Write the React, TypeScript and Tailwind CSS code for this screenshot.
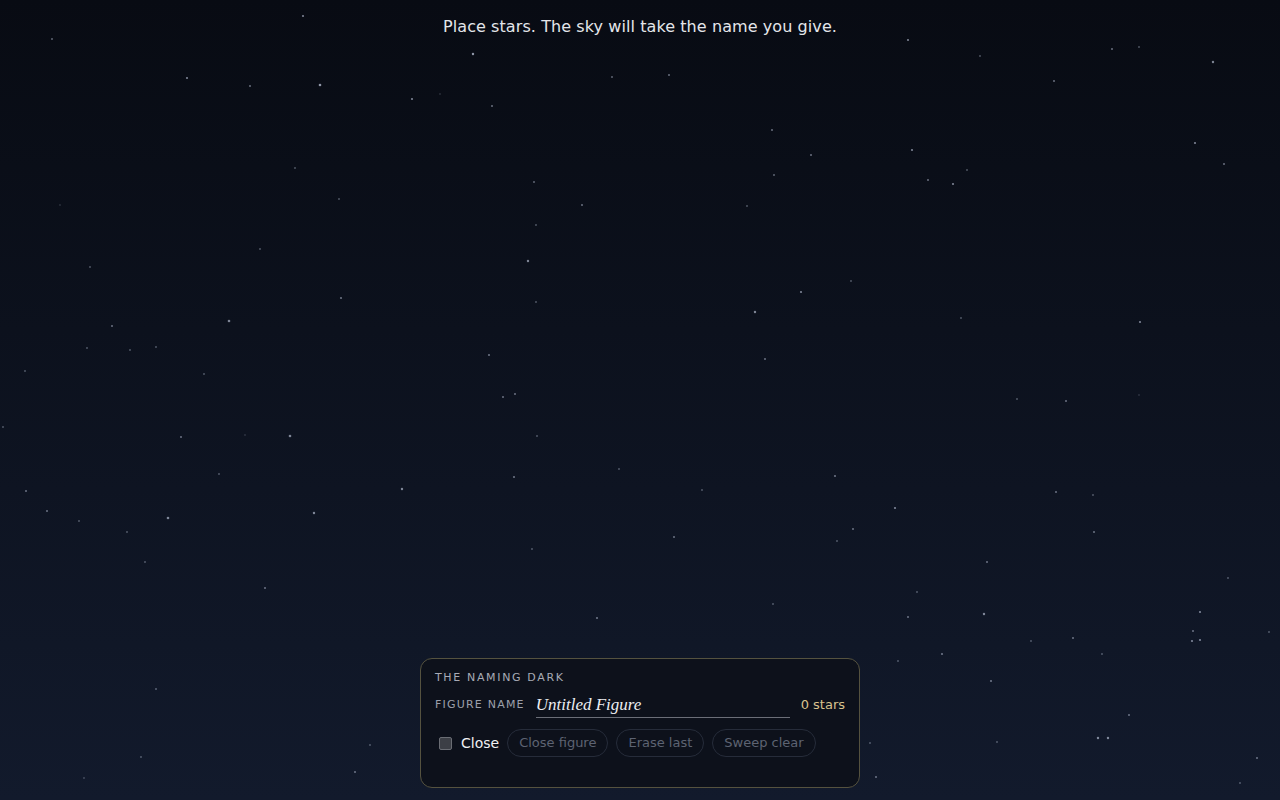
import { type JSX } from 'react';

// [x, y, radius, opacity]
const STARS: [number, number, number, number][] = [
  [303, 16, 1, 0.6], [52, 39, 0.8, 0.5], [473, 54, 1.1, 0.7], [908, 40, 1, 0.6], [1112, 49, 0.9, 0.5],
  [1139, 47, 0.8, 0.4], [1213, 62, 1.1, 0.6], [187, 78, 1, 0.6], [250, 86, 0.9, 0.5], [320, 85, 1.2, 0.7],
  [412, 99, 1, 0.6], [492, 106, 0.9, 0.5], [612, 77, 0.8, 0.5], [669, 75, 0.9, 0.5], [980, 56, 0.8, 0.4],
  [1054, 81, 0.9, 0.5], [1195, 143, 1, 0.6], [1224, 164, 0.9, 0.5], [772, 130, 0.9, 0.5], [811, 155, 0.9, 0.5],
  [912, 150, 1, 0.6], [928, 180, 0.9, 0.5], [953, 184, 1, 0.6], [967, 170, 0.8, 0.4], [774, 175, 0.8, 0.5],
  [295, 168, 0.8, 0.4], [534, 182, 0.8, 0.5], [339, 199, 0.8, 0.4], [582, 205, 0.9, 0.5], [747, 206, 0.8, 0.4],
  [536, 225, 0.8, 0.4], [260, 249, 0.8, 0.4], [528, 261, 1.1, 0.6], [90, 267, 0.8, 0.4], [851, 281, 0.8, 0.4],
  [801, 292, 1, 0.6], [341, 298, 1, 0.5], [536, 302, 0.8, 0.4], [755, 312, 1.1, 0.6], [229, 321, 1.2, 0.6],
  [112, 326, 0.9, 0.5], [961, 318, 0.8, 0.4], [1140, 322, 1, 0.6], [87, 348, 0.8, 0.4], [130, 350, 0.8, 0.4],
  [156, 347, 0.8, 0.4], [489, 355, 1, 0.5], [765, 359, 0.9, 0.5], [25, 371, 0.8, 0.4], [204, 374, 0.8, 0.4],
  [503, 397, 0.9, 0.5], [515, 394, 0.9, 0.5], [1066, 401, 0.9, 0.5], [1017, 399, 0.8, 0.4], [3, 427, 0.8, 0.4],
  [181, 437, 0.9, 0.5], [290, 436, 1.2, 0.6], [537, 436, 0.8, 0.4], [619, 469, 0.8, 0.4], [514, 477, 1, 0.5],
  [835, 476, 1, 0.5], [219, 474, 0.8, 0.4], [26, 491, 0.9, 0.5], [402, 489, 1.1, 0.6], [702, 490, 0.8, 0.4],
  [1056, 492, 0.9, 0.5], [1093, 495, 0.8, 0.4], [895, 508, 1, 0.6], [47, 511, 0.9, 0.5], [168, 518, 1.2, 0.6],
  [314, 513, 1.1, 0.6], [79, 521, 0.8, 0.4], [853, 529, 0.9, 0.5], [1094, 532, 0.9, 0.5], [127, 532, 0.8, 0.4],
  [674, 537, 0.9, 0.5], [532, 549, 0.8, 0.4], [837, 541, 0.8, 0.4], [145, 562, 0.8, 0.4], [987, 562, 0.9, 0.5],
  [265, 588, 0.9, 0.5], [917, 592, 0.8, 0.4], [1228, 578, 0.8, 0.4], [984, 614, 1.1, 0.6], [1200, 612, 1, 0.6],
  [597, 618, 1, 0.5], [773, 604, 0.8, 0.4], [908, 617, 0.9, 0.5], [1193, 631, 0.9, 0.5], [1192, 641, 1, 0.6],
  [1200, 640, 1, 0.6], [1269, 632, 0.8, 0.4], [1073, 638, 0.9, 0.5], [1031, 641, 0.8, 0.4], [942, 654, 1, 0.5],
  [898, 661, 0.8, 0.4], [1102, 654, 0.8, 0.4], [991, 681, 1, 0.5], [156, 689, 0.9, 0.4], [1129, 715, 0.9, 0.5],
  [1098, 738, 1.1, 0.6], [1108, 738, 1.1, 0.6], [997, 742, 0.8, 0.4], [370, 745, 0.8, 0.4], [870, 743, 0.8, 0.4],
  [1257, 758, 0.9, 0.5], [141, 757, 0.8, 0.4], [355, 772, 0.9, 0.5], [84, 778, 0.8, 0.3], [1240, 783, 0.8, 0.4],
  [876, 777, 0.9, 0.5], [245, 435, 0.7, 0.3], [1139, 395, 0.7, 0.3], [440, 94, 0.7, 0.3], [60, 205, 0.7, 0.3],
];

/**
 * Background layer: the scattered star field drawn as one svg.
 */
function StarField(): JSX.Element {
  return (
    <svg className="absolute inset-0 h-full w-full" viewBox="0 0 1280 800" aria-hidden="true">
      {STARS.map(([x, y, r, o], i) => (
        <circle key={i} cx={x} cy={y} r={r * 1.1} fill="#c9d2e6" opacity={o} />
      ))}
    </svg>
  );
}

function PillButton({ label }: { label: string }): JSX.Element {
  return (
    <button
      type="button"
      disabled
      className="flex h-[28px] items-center rounded-full border border-[#262c3a] px-[11px] text-[13px] text-[#5d6372]"
    >
      {label}
    </button>
  );
}

export default function App(): JSX.Element {
  return (
    <div
      className="relative flex h-screen w-full flex-col items-center overflow-hidden bg-gradient-to-b from-[#080b13] to-[#121a2c]"
      style={{ fontFamily: '"DejaVu Sans", sans-serif' }}
    >
      <StarField />

      <p className="relative mt-[17px] text-[16px] leading-5 tracking-[0.005em] text-[#e4e6ea]">
        Place stars. The sky will take the name you give.
      </p>

      <div className="flex-1" />

      <div className="relative mb-[12px] flex w-[440px] flex-col rounded-[12px] border border-[#55523f] bg-[#0d111b] px-[14px] pt-[11px] pb-[30px]">
        <div className="h-[16px] text-[11px] leading-4 tracking-[0.15em] text-[#a7abb5]">
          THE NAMING DARK
        </div>

        <div className="mt-[6px] flex h-[26px] items-center gap-[11px]">
          <span className="text-[11px] tracking-[0.11em] text-[#9ca0ab]">FIGURE NAME</span>
          <div className="flex h-full flex-1 items-center border-b border-[#6b6e78]">
            <span
              className="text-[17px] italic text-[#eceef2]"
              style={{ fontFamily: '"Liberation Serif", serif' }}
            >
              Untitled Figure
            </span>
          </div>
          <span className="text-[13px] text-[#d8c28e]">0 stars</span>
        </div>

        <div className="mt-[11px] flex items-center gap-[8px]">
          <label className="ml-[4px] flex items-center gap-[9px]">
            <span className="h-[13px] w-[13px] rounded-[2px] border border-[#6a6d74] bg-[#3c3f46]" />
            <span className="text-[14px] text-[#f1f2f4]">Close</span>
          </label>
          <PillButton label="Close figure" />
          <PillButton label="Erase last" />
          <PillButton label="Sweep clear" />
        </div>
      </div>
    </div>
  );
}
